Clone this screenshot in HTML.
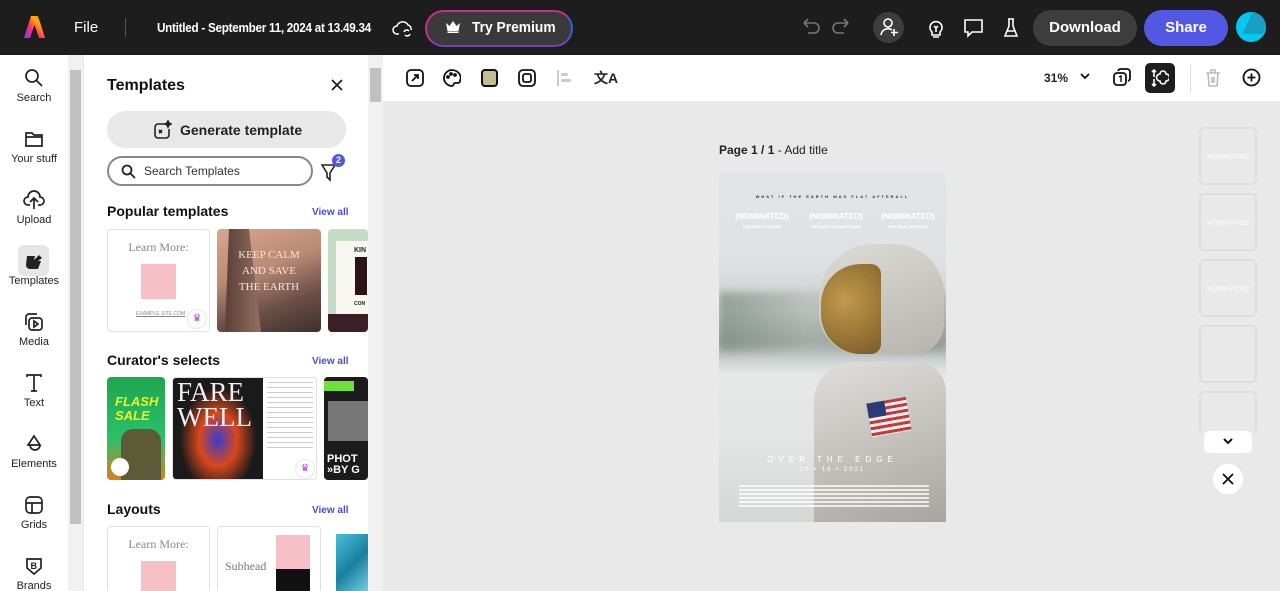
<!DOCTYPE html>
<html><head><meta charset="utf-8"><style>
*{box-sizing:border-box;margin:0;padding:0}
html,body{width:1280px;height:591px;overflow:hidden}
body{font-family:"Liberation Sans",sans-serif;background:#e9e9e9;position:relative;color:#222}
.a{position:absolute}
.top{left:0;top:0;width:1280px;height:55px;background:#1d1d1d;color:#fff}
.rail{left:0;top:55px;width:68px;height:536px;background:#fff}
.ri{position:absolute;left:0;width:68px;text-align:center;font-size:11px;color:#222}
.ri svg{display:block;margin:0 auto 4px}
.sb{background:#f1f1f1}
.thumb{background:#c1c1c1}
.panel{left:84px;top:55px;width:284px;height:536px;background:#fff;overflow:hidden}
.card{position:absolute;border:1px solid #e1e1e1;border-radius:4px;overflow:hidden;background:#fff}
.h{position:absolute;font-weight:bold;font-size:14px;color:#111}
.va{position:absolute;font-size:10px;color:#4b4bdc;font-weight:bold}
.tb{left:383px;top:55px;width:897px;height:46px;background:#fff}
.pt{position:absolute;left:1199px;width:58px;height:58px;border:2px solid #dedede;border-radius:5px;color:#f6f6f6;font-size:7px;font-weight:bold;text-align:center;line-height:58px}
</style></head><body>
<div class="a top">
 <svg class="a" style="left:24px;top:16px" width="21" height="22" viewBox="0 0 21 22"><defs><linearGradient id="lg" x1="0" y1="1" x2="1" y2="0"><stop offset="0" stop-color="#7b3cff"/><stop offset=".4" stop-color="#ff2e6a"/><stop offset=".7" stop-color="#ffb000"/><stop offset="1" stop-color="#ff4f00"/></linearGradient></defs><path d="M7 0h7l7 22h-6l-4.5-13L6 22H0z" fill="url(#lg)"/></svg>
 <div class="a" style="left:74px;top:19px;font-size:15px">File</div>
 <div class="a" style="left:125px;top:18px;width:1px;height:19px;background:#555"></div>
 <div class="a" style="left:157px;top:20px;font-size:13px;font-weight:bold;letter-spacing:-.3px;white-space:nowrap;transform:scaleX(.9);transform-origin:left">Untitled - September 11, 2024 at 13.49.34</div>
 <svg class="a" style="left:392px;top:18px" width="22" height="20" viewBox="0 0 22 20" fill="none" stroke="#fff" stroke-width="1.5"><path d="M7 16H5a4 4 0 010-8 6 6 0 0111-1 4 4 0 013 5"/><path d="M12 14a3 3 0 015-1M18 16a3 3 0 01-5 1"/></svg>
 <div class="a" style="left:425px;top:10px;width:148px;height:37px;border-radius:19px;border:2px solid #c0308e;border-right-color:#3b5bd9;border-bottom-color:#7a3fc0;background:#3a3a3a"></div>
 <svg class="a" style="left:446px;top:21px" width="14" height="12" viewBox="0 0 14 12"><path d="M0 2l3.5 3L7 0l3.5 5L14 2l-1.5 8h-11z" fill="#fff"/><rect x="1.5" y="10.5" width="11" height="1.5" fill="#fff"/></svg>
 <div class="a" style="left:472px;top:19px;font-size:15px;font-weight:bold;transform:scaleX(.92);transform-origin:left">Try Premium</div>
 <svg class="a" style="left:800px;top:18px" width="52" height="20" fill="none" stroke="#777" stroke-width="1.6"><path d="M4 5h10a5 5 0 010 10H8M4 5l4-4M4 5l4 4"/><path d="M48 5H38a5 5 0 000 10h6M48 5l-4-4M48 5l-4 4"/></svg>
 <div class="a" style="left:873px;top:12px;width:31px;height:31px;border-radius:50%;background:#3d3d3d"></div>
 <svg class="a" style="left:879px;top:17px" width="20" height="20" fill="none" stroke="#fff" stroke-width="1.6"><circle cx="9" cy="6" r="4"/><path d="M2 18a7 7 0 0111-5M15 12v7M12 15.5h7"/></svg>
 <svg class="a" style="left:926px;top:17px" width="20" height="22" fill="none" stroke="#fff" stroke-width="1.6"><path d="M6 15a6 6 0 118 0v3H6z M7 20h6M10 11v4M8 9l2 2 2-2"/></svg>
 <svg class="a" style="left:963px;top:18px" width="22" height="20" fill="none" stroke="#fff" stroke-width="1.6"><path d="M2 2h17v12H9l-4 4v-4H2z"/></svg>
 <svg class="a" style="left:1003px;top:17px" width="16" height="22" fill="none" stroke="#fff" stroke-width="1.6"><path d="M5 2h6M6 2v7L2 19h12L10 9V2M4 14h8"/></svg>
 <div class="a" style="left:1033px;top:10px;width:104px;height:36px;border-radius:18px;background:#3d3d3d;font-size:15px;font-weight:bold;text-align:center;line-height:36px">Download</div>
 <div class="a" style="left:1144px;top:10px;width:84px;height:36px;border-radius:18px;background:#5258e4;font-size:15px;font-weight:bold;text-align:center;line-height:36px">Share</div>
 <div class="a" style="left:1236px;top:12px;width:30px;height:30px;border-radius:50%;background:#00c8ef;overflow:hidden"><div style="position:absolute;left:12px;top:-2px;width:20px;height:24px;background:#1a9fc4;transform:skewX(-25deg)"></div></div>
</div>

<div class="a rail">
 <div class="ri" style="top:13px"><svg width="20" height="20" fill="none" stroke="#222" stroke-width="1.7"><circle cx="8" cy="8" r="6"/><path d="M12.5 12.5L18 18"/></svg>Search</div>
 <div class="ri" style="top:74px"><svg width="20" height="20" fill="none" stroke="#222" stroke-width="1.7"><path d="M2 4h6l2 2h8v11H2zM2 8h16"/></svg>Your stuff</div>
 <div class="ri" style="top:135px"><svg width="22" height="20" fill="none" stroke="#222" stroke-width="1.7"><path d="M7 15H5a4 4 0 010-8 6 6 0 0112 0 4 4 0 010 8h-2M11 19V9M7 12l4-4 4 4"/></svg>Upload</div>
 <div class="a" style="left:18px;top:190px;width:31px;height:31px;border-radius:6px;background:#e6e6e6"></div>
 <div class="ri" style="top:196px"><svg width="20" height="20"><path d="M3 5h8l-1 4 5-5 3 3-4 3h3l-3 8H6a4 4 0 01-4-4z" fill="#222"/></svg>Templates</div>
 <div class="ri" style="top:257px"><svg width="20" height="20" fill="none" stroke="#222" stroke-width="1.7"><rect x="5" y="6" width="13" height="12" rx="3"/><path d="M2 13V5a3 3 0 013-3h8M10 9v6l4-3z"/></svg>Media</div>
 <div class="ri" style="top:318px"><svg width="20" height="20" fill="none" stroke="#222" stroke-width="1.7"><path d="M3 4V2h14v2M10 2v16M7 18h6"/></svg>Text</div>
 <div class="ri" style="top:379px"><svg width="20" height="20" fill="none" stroke="#222" stroke-width="1.7"><path d="M10 2L4 11h12zM6 11a5 5 0 1010 0"/></svg>Elements</div>
 <div class="ri" style="top:440px"><svg width="20" height="20" fill="none" stroke="#222" stroke-width="1.7"><rect x="2" y="2" width="16" height="16" rx="4"/><path d="M2 8h16M8 8v10"/></svg>Grids</div>
 <div class="ri" style="top:501px"><svg width="20" height="20" fill="none" stroke="#222" stroke-width="1.7"><path d="M3 3h14v9l-7 6-7-6z"/><text x="6.5" y="13" font-size="9" font-weight="bold" fill="#222" stroke="none" font-family="Liberation Sans">B</text></svg>Brands</div>
</div>
<div class="a sb" style="left:68px;top:55px;width:15px;height:536px"></div>
<div class="a thumb" style="left:70px;top:70px;width:11px;height:454px"></div>

<div class="a panel">
 <div class="h" style="left:23px;top:22px;font-size:16px">Templates</div>
 <svg class="a" style="left:247px;top:24px" width="12" height="12" stroke="#222" stroke-width="1.8"><path d="M1 1l10 10M11 1L1 11"/></svg>
 <div class="a" style="left:23px;top:56px;width:239px;height:37px;border-radius:19px;background:#e8e8e8"></div>
 <svg class="a" style="left:68px;top:65px" width="20" height="20" fill="none" stroke="#222" stroke-width="1.6"><path d="M13 4H6a3 3 0 00-3 3v8a3 3 0 003 3h8a3 3 0 003-3V9"/><path d="M16 1l1 2 2 1-2 1-1 2-1-2-2-1 2-1z" fill="#222"/><path d="M7 10l3 3M10 10l-3 3"/></svg>
 <div class="a" style="left:96px;top:67px;font-size:14px;font-weight:bold;color:#222">Generate template</div>
 <div class="a" style="left:23px;top:101px;width:206px;height:30px;border-radius:15px;border:2px solid #888"></div>
 <svg class="a" style="left:37px;top:109px" width="15" height="15" fill="none" stroke="#222" stroke-width="1.8"><circle cx="6" cy="6" r="4.5"/><path d="M9.5 9.5L14 14"/></svg>
 <div class="a" style="left:60px;top:109px;font-size:12px;color:#333">Search Templates</div>
 <svg class="a" style="left:237px;top:107px" width="16" height="20" fill="none" stroke="#222" stroke-width="1.6"><path d="M1 3h13L9 11v7l-3-3v-4z"/></svg>
 <div class="a" style="left:248px;top:99px;width:13px;height:13px;border-radius:50%;background:#5258e4;color:#fff;font-size:9px;font-weight:bold;text-align:center;line-height:13px">2</div>

 <div class="h" style="left:23px;top:148px">Popular templates</div>
 <div class="va" style="left:228px;top:152px">View all</div>
 <div class="card" style="left:23px;top:174px;width:103px;height:103px">
  <div class="a" style="left:0;top:10px;width:101px;text-align:center;font-family:'Liberation Serif',serif;font-size:12px;color:#888">Learn More:</div>
  <div class="a" style="left:33px;top:34px;width:35px;height:35px;background:#f6c0c6"></div>
  <div class="a" style="left:28px;top:81px;font-size:5px;color:#888;text-decoration:underline">EXAMPLE SITE.COM</div>
  <div class="a" style="left:80px;top:80px;width:18px;height:18px;border-radius:50%;background:#fff;box-shadow:0 0 2px #bbb;color:#b23fc8;font-size:10px;text-align:center;line-height:18px">♛</div>
 </div>
 <div class="card" style="left:133px;top:174px;width:104px;height:103px;border:none;background:linear-gradient(160deg,#d9a58d 0%,#b98a75 40%,#6c5048 70%,#3e2f2c 100%)">
  <div class="a" style="left:8px;top:0;width:40px;height:103px;background:linear-gradient(90deg,#5a4038,#9a7462);clip-path:polygon(10% 0,60% 0,90% 100%,0 100%)"></div>
  <div class="a" style="left:20px;top:18px;width:64px;text-align:center;color:#f1e5df;font-family:'Liberation Serif',serif;font-size:11px;line-height:16px">KEEP CALM AND SAVE THE EARTH</div>
 </div>
 <div class="card" style="left:244px;top:174px;width:40px;height:103px;border:none;background:#c6dcc4">
  <div class="a" style="left:8px;top:12px;width:40px;height:83px;background:#f8f6f0"></div>
  <div class="a" style="left:0;top:85px;width:40px;height:18px;background:#3a1f24"></div>
  <div class="a" style="left:26px;top:18px;font-size:7px;font-weight:bold">KIN</div>
  <div class="a" style="left:27px;top:28px;width:12px;height:38px;background:#2a1418"></div>
  <div class="a" style="left:26px;top:72px;font-size:5px;font-weight:bold">CON</div>
 </div>

 <div class="h" style="left:23px;top:297px">Curator's selects</div>
 <div class="va" style="left:228px;top:301px">View all</div>
 <div class="card" style="left:23px;top:322px;width:58px;height:103px;border:none;background:linear-gradient(180deg,#1fa54e,#2bc06a 60%,#d5801e)">
  <div class="a" style="left:8px;top:18px;color:#f4f020;font-weight:900;font-size:13px;line-height:14px;font-style:italic">FLASH SALE</div>
  <div class="a" style="left:14px;top:52px;width:40px;height:51px;background:#5d5a38;border-radius:12px 12px 0 0"></div>
  <div class="a" style="left:4px;top:81px;width:18px;height:18px;border-radius:50%;background:#fff"></div>
 </div>
 <div class="card" style="left:88px;top:322px;width:145px;height:103px">
  <div class="a" style="left:0;top:0;width:90px;height:103px;background:radial-gradient(ellipse at 50% 60%,#3a3cd0 0%,#d8481c 30%,#1a1a1a 60%)"></div>
  <div class="a" style="left:4px;top:2px;color:#eee;font-family:'Liberation Serif',serif;font-size:27px;line-height:25px">FARE WELL</div>
  <div class="a" style="left:94px;top:4px;width:46px;height:70px;background:repeating-linear-gradient(#ccc 0 1px,transparent 1px 5px)"></div>
  <div class="a" style="left:123px;top:82px;width:18px;height:18px;border-radius:50%;background:#fff;box-shadow:0 0 2px #bbb;color:#b23fc8;font-size:10px;text-align:center;line-height:18px">♛</div>
 </div>
 <div class="card" style="left:240px;top:322px;width:44px;height:103px;border:none;background:#1b1b1b">
  <div class="a" style="left:0;top:4px;width:30px;height:10px;background:#6fe03a"></div>
  <div class="a" style="left:4px;top:24px;width:40px;height:40px;background:#777"></div>
  <div class="a" style="left:3px;top:77px;color:#fff;font-weight:bold;font-size:11px;line-height:11px">PHOT<br>»BY G</div>
 </div>

 <div class="h" style="left:23px;top:446px">Layouts</div>
 <div class="va" style="left:228px;top:450px">View all</div>
 <div class="card" style="left:23px;top:471px;width:103px;height:70px">
  <div class="a" style="left:0;top:10px;width:101px;text-align:center;font-family:'Liberation Serif',serif;font-size:12px;color:#888">Learn More:</div>
  <div class="a" style="left:33px;top:34px;width:35px;height:35px;background:#f6c0c6"></div>
 </div>
 <div class="card" style="left:133px;top:471px;width:104px;height:70px">
  <div class="a" style="left:7px;top:32px;font-family:'Liberation Serif',serif;font-size:12px;color:#777">Subhead</div>
  <div class="a" style="left:58px;top:8px;width:34px;height:34px;background:#f6c0c6"></div>
  <div class="a" style="left:58px;top:42px;width:34px;height:28px;background:#111"></div>
 </div>
 <div class="card" style="left:244px;top:471px;width:40px;height:70px;border:none;background:#fff"><div class="a" style="left:8px;top:8px;width:32px;height:62px;background:linear-gradient(135deg,#4ac0d8,#1b7fa0,#7ad8e8)"></div></div>
</div>
<div class="a sb" style="left:368px;top:55px;width:15px;height:536px"></div>
<div class="a thumb" style="left:370px;top:68px;width:11px;height:34px"></div>

<div class="a tb">
 <svg class="a" style="left:23px;top:14px" width="18" height="18" fill="none" stroke="#111" stroke-width="1.8"><rect x="1" y="1" width="16" height="16" rx="4"/><path d="M6 12l6-6M8 6h4v4"/></svg>
 <svg class="a" style="left:60px;top:14px" width="18" height="18" fill="none" stroke="#111" stroke-width="1.8"><path d="M9 1a8 8 0 100 16c2 0 1-3 3-3h3a2 2 0 002-2A9 8 0 009 1z"/><circle cx="5" cy="8" r="1" fill="#111"/><circle cx="8" cy="5" r="1" fill="#111"/><circle cx="12" cy="6" r="1" fill="#111"/></svg>
 <div class="a" style="left:98px;top:14px;width:17px;height:18px;border-radius:4px;background:#c2bb94;border:2px solid #111"></div>
 <svg class="a" style="left:135px;top:14px" width="18" height="18" fill="none" stroke="#111" stroke-width="1.8"><rect x="1" y="1" width="16" height="16" rx="4"/><rect x="5" y="5" width="8" height="8" rx="2"/></svg>
 <svg class="a" style="left:173px;top:15px" width="16" height="16"><rect x="1" y="0" width="2" height="16" fill="#ccc"/><rect x="5" y="3" width="7" height="3" rx="1" fill="#ccc"/><rect x="5" y="9" width="10" height="3" rx="1" fill="#ccc"/></svg>
 <div class="a" style="left:211px;top:13px;font-size:14px;font-weight:bold">文A</div>
 <div class="a" style="left:661px;top:16px;font-size:12px;font-weight:bold">31%</div>
 <svg class="a" style="left:697px;top:18px" width="10" height="8" fill="none" stroke="#111" stroke-width="1.8"><path d="M1 1l4 4 4-4"/></svg>
 <svg class="a" style="left:730px;top:13px" width="18" height="18" fill="none" stroke="#111" stroke-width="1.8"><rect x="1" y="5" width="12" height="12" rx="3"/><path d="M5 3a3 3 0 013-2h6a3 3 0 013 3v6a3 3 0 01-2 3"/><path d="M6 9l2-1v6" stroke-width="1.4"/></svg>
 <div class="a" style="left:762px;top:8px;width:30px;height:30px;border-radius:5px;background:#1d1d1d"></div>
 <svg class="a" style="left:768px;top:14px" width="18" height="18" fill="none" stroke="#fff" stroke-width="1.6"><path d="M3 1v7M1 3l2-2 2 2M3 17v-7M1 15l2 2 2-2"/><path d="M9 5a3 3 0 016 0 3 3 0 010 7 3 3 0 01-6 0 3 3 0 010-7z"/></svg>
 <div class="a" style="left:807px;top:10px;width:1px;height:28px;background:#ddd"></div>
 <svg class="a" style="left:822px;top:14px" width="16" height="18" fill="none" stroke="#bbb" stroke-width="1.6"><path d="M1 4h14M6 4V1h4v3M3 4l1 13h8l1-13M7 8v6M9 8v6"/></svg>
 <svg class="a" style="left:859px;top:13px" width="19" height="19" fill="none" stroke="#111" stroke-width="1.8"><circle cx="9.5" cy="9.5" r="8"/><path d="M9.5 5.5v8M5.5 9.5h8"/></svg>
</div>

<div class="a" style="left:719px;top:143px;font-size:12px;color:#222"><b>Page 1 / 1</b> - Add title</div>
<div class="a" style="left:719px;top:172px;width:227px;height:350px;overflow:hidden;background:linear-gradient(180deg,#e2e5e6 0%,#dfe2e3 25%,#c9cfcd 40%,#a9b1ad 48%,#e6e8e8 58%,#e4e6e6 75%,#d5d7d6 100%)">
 <div class="a" style="left:0;top:120px;width:227px;height:60px;background:linear-gradient(90deg,rgba(110,125,115,.6),rgba(150,160,150,.3) 40%,rgba(120,130,120,.5));filter:blur(4px)"></div>
 <div class="a" style="left:100px;top:72px;width:125px;height:110px;border-radius:55px 50px 30px 40px;background:linear-gradient(160deg,#dcdcd6,#b6b4ac)"></div>
 <div class="a" style="left:102px;top:92px;width:60px;height:90px;border-radius:40px 10px 10px 40px;background:radial-gradient(circle at 40% 40%,#c29a4c,#7a5a28)"></div>
 <div class="a" style="left:95px;top:190px;width:132px;height:160px;border-radius:40px 30px 0 0;background:linear-gradient(160deg,#e0deda,#b9b7b2 70%,#a7a5a0)"></div>
 <div class="a" style="left:150px;top:228px;width:40px;height:34px;background:repeating-linear-gradient(180deg,#c43a3a 0 3px,#eee 3px 6px);transform:rotate(-10deg)"><div style="width:18px;height:15px;background:#2b3b76"></div></div>
 <div class="a" style="left:0;top:22px;width:227px;text-align:center;font-size:4px;letter-spacing:2px;color:#333;font-weight:bold">WHAT IF THE EARTH WAS FLAT AFTERALL</div>
 <div class="a" style="left:8px;top:40px;width:70px;color:#fff;font-size:8px;font-weight:bold;line-height:9px;text-align:center">(NOMINATED)<br><span style="font-size:4px">FOR BEST PICTURE</span></div>
 <div class="a" style="left:82px;top:40px;width:70px;color:#fff;font-size:8px;font-weight:bold;line-height:9px;text-align:center">(NOMINATED)<br><span style="font-size:4px">FOR BEST SOUNDTRACK</span></div>
 <div class="a" style="left:154px;top:40px;width:70px;color:#fff;font-size:8px;font-weight:bold;line-height:9px;text-align:center">(NOMINATED)<br><span style="font-size:4px">FOR BEST EFFECTS</span></div>
 <div class="a" style="left:0;top:283px;width:227px;text-align:center;font-size:8px;letter-spacing:5px;color:#fff">OVER THE EDGE</div>
 <div class="a" style="left:0;top:295px;width:227px;text-align:center;font-size:6px;letter-spacing:2px;color:#fff">10 • 18 • 2021</div>
 <div class="a" style="left:20px;top:313px;width:190px;height:22px;background:repeating-linear-gradient(180deg,rgba(255,255,255,.75) 0 2px,transparent 2px 4px)"></div>
</div>

<div class="pt" style="top:127px">NOMINATED</div>
<div class="pt" style="top:193px">NOMINATED</div>
<div class="pt" style="top:259px">NOMINATED</div>
<div class="pt" style="top:325px"></div>
<div class="pt" style="top:391px;height:40px;border-bottom:none;border-radius:5px 5px 0 0"></div>
<div class="a" style="left:1204px;top:431px;width:48px;height:22px;border-radius:5px;background:#fff"></div>
<svg class="a" style="left:1223px;top:438px" width="10" height="8" fill="none" stroke="#111" stroke-width="2"><path d="M1 1l4 4 4-4"/></svg>
<div class="a" style="left:1213px;top:464px;width:30px;height:30px;border-radius:50%;background:#fff"></div>
<svg class="a" style="left:1222px;top:473px" width="12" height="12" stroke="#111" stroke-width="1.8"><path d="M1 1l10 10M11 1L1 11"/></svg>
</body></html>
